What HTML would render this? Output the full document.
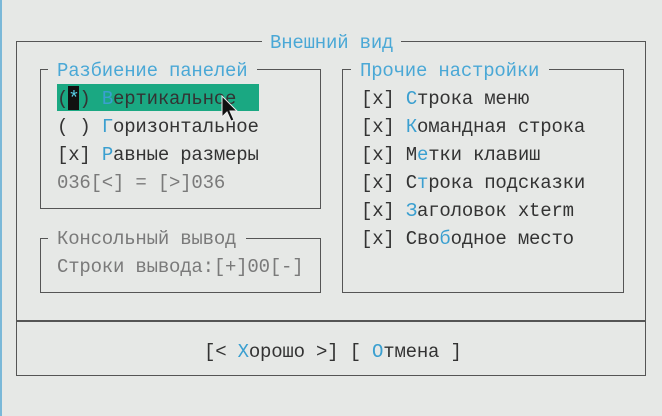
<!DOCTYPE html><html><head><meta charset="utf-8"><style>
body{margin:0;width:662px;height:416px;background:#e6e8e6;position:relative;overflow:hidden;font-family:"Liberation Mono","DejaVu Sans Mono",monospace;font-size:19px;letter-spacing:-0.2px;color:#333}
.t{position:absolute;white-space:pre;line-height:28px;height:28px}
.h{color:#3a9fd0}.g{color:#7a7a7a}.ti{color:#4aa8d6}
.l{position:absolute;background:#555}
.b{position:absolute;border:1.5px solid #555;box-sizing:border-box}
</style></head><body>
<div style="position:absolute;left:0;top:0;width:2px;height:416px;background:#7ab8d8"></div>
<div class="b" style="left:16px;top:41px;width:630px;height:335px"></div>
<div class="l" style="left:16px;top:320px;width:630px;height:1.5px"></div>
<div class="t ti" style="left:262px;top:29px;background:#e6e8e6;padding:0 8px">Внешний вид</div>

<div class="b" style="left:40px;top:69px;width:281px;height:140px"></div>
<div class="t ti" style="left:48px;top:57px;background:#e6e8e6;padding:0 10px 0 9px">Разбиение панелей</div>
<div style="position:absolute;left:57px;top:84px;width:202px;height:27px;background:#1aa882"></div>
<div style="position:absolute;left:68px;top:86px;width:11px;height:24px;background:#111"></div>
<div class="t" style="left:57px;top:85px">(<span style="color:#5ad0e8">*</span>) <span class="h">В</span>ертикальное</div>
<div class="t" style="left:57px;top:113px">( ) <span class="h">Г</span>оризонтальное</div>
<div class="t" style="left:57px;top:141px">[x] <span class="h">Р</span>авные размеры</div>
<div class="t g" style="left:57px;top:169px">036[&lt;] = [&gt;]036</div>
<svg style="position:absolute;left:220px;top:95px" width="20" height="28" viewBox="0 0 20 28"><path d="M2 1 L2 22 L7 17 L11 26 L14 25 L10 16 L17 16 Z" fill="#111" stroke="#eee" stroke-width="1"/></svg>

<div class="b" style="left:40px;top:238px;width:281px;height:55px"></div>
<div class="t g" style="left:48px;top:225px;background:#e6e8e6;padding:0 10px 0 9px">Консольный вывод</div>
<div class="t g" style="left:57px;top:253px">Строки вывода:[+]00[-]</div>

<div class="b" style="left:342px;top:69px;width:282px;height:224px"></div>
<div class="t ti" style="left:351px;top:57px;background:#e6e8e6;padding:0 10px 0 9px">Прочие настройки</div>
<div class="t" style="left:361px;top:85px">[x] <span class="h">С</span>трока меню</div>
<div class="t" style="left:361px;top:113px">[x] <span class="h">К</span>омандная строка</div>
<div class="t" style="left:361px;top:141px">[x] М<span class="h">е</span>тки клавиш</div>
<div class="t" style="left:361px;top:169px">[x] С<span class="h">т</span>рока подсказки</div>
<div class="t" style="left:361px;top:197px">[x] <span class="h">З</span>аголовок xterm</div>
<div class="t" style="left:361px;top:225px">[x] Сво<span class="h">б</span>одное место</div>

<div class="t" style="left:204px;top:338px">[&lt; <span class="h">Х</span>орошо &gt;] [ <span class="h">О</span>тмена ]</div>
</body></html>
